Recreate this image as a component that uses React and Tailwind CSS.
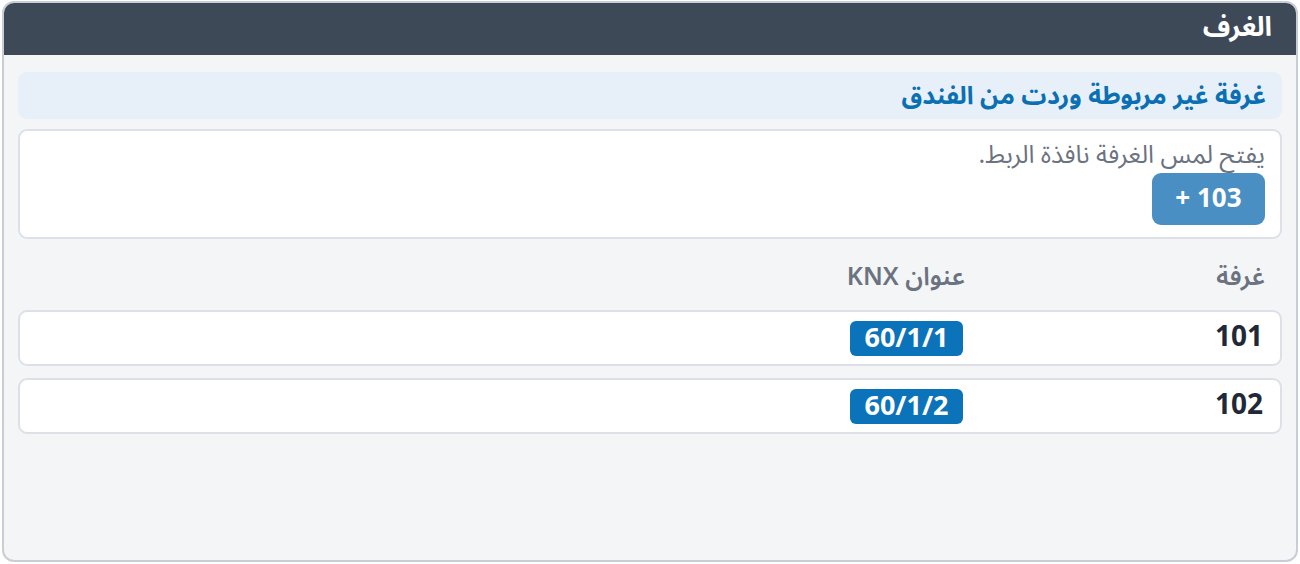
import React from 'react';

const rooms = [
  { number: '101', address: '60/1/1' },
  { number: '102', address: '60/1/2' },
];

const font = { fontFamily: '"Noto Sans Arabic", "Noto Sans", "DejaVu Sans", sans-serif' };

const App = () => {
  return (
    <div dir="rtl" className="w-[1300px] h-[564px] bg-white p-[2px] pt-[1px]" style={font}>
      <div className="h-[561px] flex flex-col rounded-[12px] border-2 border-[#c9ced6] bg-[#f3f5f7] overflow-hidden">
        {/* Panel header */}
        <div className="h-[52px] shrink-0 bg-[#3d4957] flex items-center px-[24px] pb-[3px]">
          <h1 className="text-white text-[27px] font-bold leading-[40px]">الغرف</h1>
        </div>

        <div className="flex-1 px-[14px] pt-[17px]">
          {/* Unlinked rooms section */}
          <div className="h-[47px] rounded-[9px] bg-[#e7f0f8] flex items-center px-[16px]">
            <h2 className="text-[#0b6fb3] text-[25px] font-bold leading-[40px]">غرفة غير مربوطة وردت من الفندق</h2>
          </div>

          <div className="mt-[10px] rounded-[9px] border-2 border-[#dde1e7] bg-white px-[15px] pt-[9px] pb-[12px]">
            <p className="text-[#6b7280] text-[25px] leading-[30px]">يفتح لمس الغرفة نافذة الربط.</p>
            <button className="block mt-[3px] h-[52px] w-[113px] rounded-[9px] bg-[#4a8fc4] text-white text-[26px] font-bold leading-none">
              103 +
            </button>
          </div>

          {/* Room list */}
          <div className="grid grid-cols-[300px_1fr] px-[17px] mt-[22px] h-[32px] items-center text-[#6b7280] text-[25px] font-semibold leading-[32px]">
            <span>غرفة</span>
            <span>عنوان KNX</span>
          </div>

          <div className="mt-[17px] flex flex-col gap-[12px]">
            {rooms.map((room) => (
              <div
                key={room.number}
                className="h-[56px] grid grid-cols-[300px_1fr] items-center rounded-[9px] border-2 border-[#dde1e7] bg-white px-[17px]"
              >
                <span className="text-[#1f2937] text-[28px] font-bold leading-none">{room.number}</span>
                <span className="justify-self-start">
                  <span dir="ltr" className="inline-flex items-center justify-center h-[35px] w-[113px] rounded-[6px] bg-[#0a73b9] text-white text-[27px] font-bold leading-none">
                    {room.address}
                  </span>
                </span>
              </div>
            ))}
          </div>
        </div>
      </div>
    </div>
  );
};

export default App;
